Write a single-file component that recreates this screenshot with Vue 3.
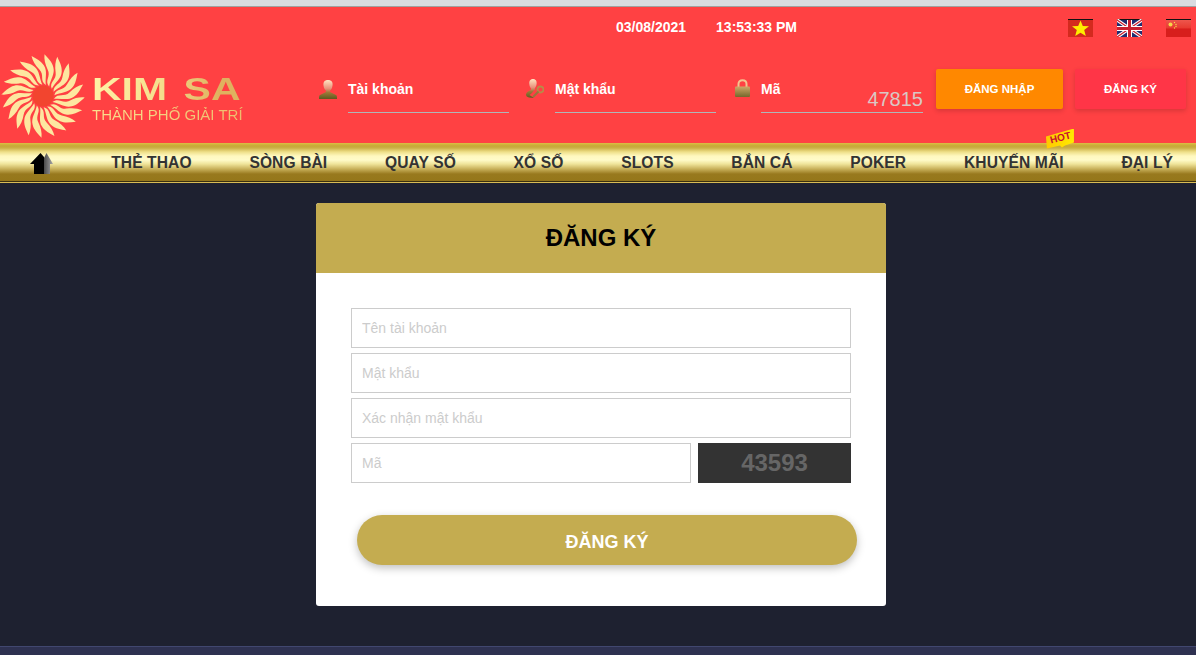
<script setup>
import { computed } from 'vue'

const petalCount = 20
const petals = computed(() =>
  Array.from({ length: petalCount }, (_, i) => (i * 360) / petalCount)
)
const navItems = ['THẺ THAO', 'SÒNG BÀI', 'QUAY SỐ', 'XỔ SỐ', 'SLOTS', 'BẮN CÁ', 'POKER', 'KHUYẾN MÃI', 'ĐẠI LÝ']
</script>

<template>
  <div class="page">
    <div class="chrome"></div>
    <header class="header">
      <div class="info-row">
        <span class="date">03/08/2021</span>
        <span class="time">13:53:33 PM</span>
        <div class="flags">
          <svg class="flag" viewBox="0 0 25 18" width="25" height="18">
            <rect width="25" height="18" fill="#d42a1e" />
            <rect width="25" height="1" fill="#111" />
            <polygon points="12.5,1.500 14.800,7 21,7.300 16.200,11.100 17.800,17 12.500,13.800 7.200,17 8.800,11.100 4,7.300 10.200,7" fill="#ffee00" />
          </svg>
          <svg class="flag" viewBox="0 0 25 18" width="25" height="18">
            <rect width="25" height="18" fill="#1f2c70" />
            <rect width="25" height="1" fill="#111" />
            <path d="M0 1 L25 18 M25 1 L0 18" stroke="#fff" stroke-width="3.400" />
            <path d="M0 1 L25 18 M25 1 L0 18" stroke="#c8202f" stroke-width="1.300" />
            <path d="M12.500 1 V18 M0 9.500 H25" stroke="#fff" stroke-width="5" />
            <path d="M12.500 1 V18 M0 9.500 H25" stroke="#c8202f" stroke-width="3" />
          </svg>
          <svg class="flag" viewBox="0 0 25 18" width="25" height="18">
            <defs>
              <linearGradient id="cnFlag" x1="0" y1="0" x2="0" y2="1">
                <stop offset="0" stop-color="#ee5a50" />
                <stop offset="0.5" stop-color="#e83a30" />
                <stop offset="0.55" stop-color="#d81e1c" />
                <stop offset="1" stop-color="#d81e1c" />
              </linearGradient>
            </defs>
            <rect width="25" height="18" fill="url(#cnFlag)" />
            <rect width="25" height="1" fill="#111" />
            <circle cx="4.500" cy="5.500" r="2" fill="#f5d84a" />
            <circle cx="8.500" cy="3.500" r=".7" fill="#f5d84a" />
            <circle cx="10" cy="5.500" r=".7" fill="#f5d84a" />
            <circle cx="10" cy="7.500" r=".7" fill="#f5d84a" />
            <circle cx="8.500" cy="9" r=".7" fill="#f5d84a" />
          </svg>
        </div>
      </div>

      <div class="login-row">
        <a class="logo">
          <svg class="sun" viewBox="0 0 88 88" width="84" height="84">
            <circle cx="44" cy="44" r="11" fill="#f2452f" />
            <g v-for="deg in petals" :key="deg" :transform="`rotate(${deg} 44 44)`">
              <path
                d="M55.500 47 C60 40 66 46 72 40 C76 36 81 33 86 32 C83 37 81 42 76 45 C70 49 63 46 55.500 47 Z"
                fill="#fde7a0"
              />
            </g>
          </svg>
          <div class="brand">
            <div class="brand-name">KIM SA</div>
            <div class="brand-sub">THÀNH PHỐ GIẢI TRÍ</div>
          </div>
        </a>

        <div class="fields">
          <label class="login-field">
            <svg class="field-icon" viewBox="0 0 18 20" width="18" height="20">
              <defs>
                <linearGradient id="iconGold" x1="0" y1="0" x2="0" y2="1">
                  <stop offset="0" stop-color="#ffe3c0" />
                  <stop offset="0.45" stop-color="#e8907a" />
                  <stop offset="0.65" stop-color="#a07a38" />
                  <stop offset="1" stop-color="#5e5a20" />
                </linearGradient>
                <linearGradient id="lockGold" x1="0" y1="0" x2="0" y2="1">
                  <stop offset="0" stop-color="#d0a868" />
                  <stop offset="1" stop-color="#75682c" />
                </linearGradient>
              </defs>
              <path d="M9 1 C12.500 1 14 3.200 13.500 6.500 C13.200 9.300 11.800 11 11 11.800 L11 13 L17 16 C18 16.600 18 18 18 20 L0 20 C0 18 0 16.600 1 16 L7 13 L7 11.800 C6.200 11 4.800 9.300 4.500 6.500 C4 3.200 5.500 1 9 1 Z" fill="url(#iconGold)" />
            </svg>
            <span class="field-body">
              <span class="field-label">Tài khoản</span>
            </span>
          </label>

          <label class="login-field">
            <svg class="field-icon" viewBox="0 0 18 20" width="18" height="20">
              <path d="M7 0 C10 0 11 2.500 10.600 5 C10.300 7 9.500 8.500 8.800 9.300 L8.800 10.500 L6 14 L3.500 16 L8 19 L3 18.500 C1 18 0 17 0 15.500 C0 13.500 3 12 5 10.800 L5 9.300 C4 8.500 3.500 7 3.300 5 C3 2.500 4 0 7 0 Z" fill="url(#iconGold)" />
              <circle cx="14.500" cy="10.500" r="3" fill="none" stroke="#b98a48" stroke-width="1.800" />
              <path d="M12.500 12.500 L7 18" stroke="#97763a" stroke-width="2" />
            </svg>
            <span class="field-body">
              <span class="field-label">Mật khẩu</span>
            </span>
          </label>

          <label class="login-field code-field">
            <svg class="field-icon lock" viewBox="0 0 15 18" width="15" height="18">
              <path d="M3.500 8 V5 C3.500 2.500 5 1.200 7.500 1.200 C10 1.200 11.500 2.500 11.500 5 V8" fill="none" stroke="#f4c490" stroke-width="2" />
              <rect y="7.500" width="15" height="10.500" rx="1" fill="url(#lockGold)" />
            </svg>
            <span class="field-body">
              <span class="field-label">Mã</span>
              <span class="code-value">47815</span>
            </span>
          </label>
        </div>

        <button class="head-btn login-btn">ĐĂNG NHẬP</button>
        <button class="head-btn signup-btn">ĐĂNG KÝ</button>
      </div>
    </header>

    <nav class="nav">
      <svg class="home" viewBox="0 0 23 21" width="23" height="21">
        <defs>
          <linearGradient id="homeGray" x1="0" y1="0" x2="1" y2="0">
            <stop offset="0" stop-color="#4a4a4a" />
            <stop offset="1" stop-color="#a8a8a8" />
          </linearGradient>
        </defs>
        <polygon points="16.500,0 23,11 20,11 20,21 14,21 14,5" fill="url(#homeGray)" />
        <polygon points="10.500,0 14,4 14,21 4,21 4,11 0,11" fill="#000" />
      </svg>
      <a v-for="item in navItems" :key="item" class="nav-item">
        {{ item }}
        <span v-if="item === 'KHUYẾN MÃI'" class="hot"><span class="hot-text">HOT</span></span>
      </a>
    </nav>

    <main class="main">
      <section class="card">
        <h1 class="card-title">ĐĂNG KÝ</h1>
        <form class="card-body" @submit.prevent>
          <input class="input" type="text" placeholder="Tên tài khoản" />
          <input class="input" type="text" placeholder="Mật khẩu" />
          <input class="input" type="text" placeholder="Xác nhận mật khẩu" />
          <div class="code-row">
            <input class="input code-input" type="text" placeholder="Mã" />
            <div class="captcha">43593</div>
          </div>
          <button class="submit" type="submit">ĐĂNG KÝ</button>
        </form>
      </section>
    </main>
    <footer class="footer"></footer>
  </div>
</template>

<style>
html, body { margin: 0; background: #1e2130; overflow: hidden; }
</style>

<style scoped>
.page {
  width: 1196px;
  height: 655px;
  overflow: hidden;
  display: flex;
  flex-direction: column;
  font-family: "Liberation Sans", Arial, sans-serif;
  background: #1e2130;
}
.chrome {
  height: 6px;
  background: #d9dbe0;
  border-bottom: 1px solid #a0a0a0;
  flex: none;
}
.header {
  height: 136px;
  flex: none;
  background: #ff4143;
  display: flex;
  flex-direction: column;
}
.info-row {
  height: 40px;
  display: flex;
  align-items: center;
  padding-left: 616px;
  color: #fff;
  font-size: 14px;
  font-weight: 700;
}
.time { margin-left: 30px; }
.flags {
  display: flex;
  gap: 24px;
  margin-left: auto;
  margin-right: 5px;
  padding-top: 2px;
}
.flag { display: block; }
.login-row {
  display: flex;
  align-items: flex-start;
  height: 96px;
}
.logo {
  width: 318px;
  flex: none;
  display: flex;
  align-items: flex-start;
  padding-top: 7px;
}
.sun { flex: none; display: block; margin-left: 1px; }
.brand { margin-left: 7px; padding-top: 19px; }
.brand-name {
  font-size: 32px;
  line-height: 33px;
  font-weight: 700;
  white-space: nowrap;
  word-spacing: 4px;
  transform: scaleX(1.28);
  transform-origin: left center;
  background: linear-gradient(90deg, #fff2a6 0%, #f5df8e 45%, #dfb15f 85%);
  -webkit-background-clip: text;
  background-clip: text;
  color: transparent;
  width: 117px;
}
.brand-sub {
  font-size: 15px;
  line-height: 18px;
  white-space: nowrap;
  background: linear-gradient(90deg, #fbe08e, #eebd6c);
  -webkit-background-clip: text;
  background-clip: text;
  color: transparent;
  margin-top: 0;
}
.fields {
  display: flex;
  gap: 16px;
  width: 605px;
  flex: none;
  padding-top: 29px;
}
.login-field {
  display: flex;
  width: 191px;
  flex: none;
}
.code-field { width: 191px; }
.field-icon {
  margin-top: 3px;
  margin-left: 1px;
  width: 18px;
  margin-right: 11px;
  flex: none;
  display: block;
}
.lock { margin-left: 3px; margin-right: 11px; width: 15px; }
.field-body {
  flex: 1;
  height: 36px;
  border-bottom: 1px solid #b0b6b8;
  display: flex;
  justify-content: space-between;
  color: #fff;
}
.field-label {
  font-size: 14px;
  font-weight: 700;
  line-height: 26px;
}
.code-value {
  font-size: 20px;
  line-height: 24px;
  margin-top: 11px;
  color: #d9c7c4;
}
.head-btn {
  height: 40px;
  margin-top: 22px;
  border: 0;
  border-radius: 2px;
  color: #fff;
  font: 700 11.500px "Liberation Sans", Arial, sans-serif;
  padding: 0;
  box-shadow: 0 2px 5px rgba(0, 0, 0, 0.16);
}
.login-btn {
  width: 127px;
  margin-left: 13px;
  background: #ff8800;
}
.signup-btn {
  width: 111px;
  margin-left: 12px;
  background: #ff3547;
}
.nav {
  height: 40px;
  flex: none;
  box-sizing: border-box;
  display: flex;
  align-items: center;
  gap: 57.700px;
  padding: 0 0 1px 30px;
  background: linear-gradient(
    180deg,
    #dcc048 0,
    #d4b63c 1px,
    #c6a838 3px,
    #cbb046 5px,
    #efe08a 9px,
    #fff8bf 13px,
    #fffbc9 17px,
    #efe49a 21px,
    #c8b05a 26px,
    #98791e 31px,
    #95771a 38px,
    #3a2f10 38px,
    #3a2f10 39px,
    #d8bc55 39px,
    #d8bc55 40px
  );
}
.home { flex: none; display: block; margin-top: 2px; margin-right: 0.500px; }
.nav-item {
  position: relative;
  font-size: 15.600px;
  letter-spacing: 0.100px;
  font-weight: 700;
  color: #333;
  white-space: nowrap;
}
.hot {
  position: absolute;
  left: 82px;
  top: -25px;
  width: 29px;
  height: 20px;
  background: linear-gradient(100deg, #ffc400, #ffee00);
  clip-path: polygon(0 8px, 28px 0, 28px 14px, 19px 17px, 16px 19px, 14px 17px, 1px 20px);
}
.hot-text {
  position: absolute;
  left: 4px;
  top: 3px;
  font-size: 10px;
  line-height: 12px;
  font-weight: 700;
  letter-spacing: 0;
  color: #c8102e;
  transform: rotate(-14deg);
}
.main {
  flex: 1;
  display: flex;
  justify-content: center;
  align-items: flex-start;
  padding-top: 20px;
  padding-left: 6px;
  box-sizing: border-box;
  min-height: 0;
}
.card {
  width: 570px;
  height: 403px;
  border-radius: 3px;
  overflow: hidden;
  background: #fff;
}
.card-title {
  margin: 0;
  height: 70px;
  line-height: 70px;
  background: #c4ac50;
  color: #000;
  font-size: 24px;
  font-weight: 700;
  text-align: center;
}
.card-body {
  display: flex;
  flex-direction: column;
  gap: 5px;
  padding: 35px 35px 0;
}
.input {
  display: block;
  box-sizing: border-box;
  width: 500px;
  height: 40px;
  border: 1px solid #ccc;
  padding: 0 10px;
  margin: 0;
  border-radius: 0;
  outline: 0;
  font: 14px "Liberation Sans", Arial, sans-serif;
  color: #333;
  background: #fff;
}
.input::placeholder { color: #ccc; opacity: 1; }
.code-row { display: flex; gap: 7px; }
.code-input { width: 340px; }
.captcha {
  width: 153px;
  height: 40px;
  line-height: 40px;
  background: #333;
  color: #666;
  font-size: 24px;
  font-weight: 700;
  text-align: center;
}
.submit {
  width: 500px;
  height: 50px;
  margin: 27px 0 0 6px;
  border: 0;
  border-radius: 25px;
  background: #c4ac50;
  color: #fff;
  font: 700 18px "Liberation Sans", Arial, sans-serif;
  box-shadow: 0 3px 8px rgba(0, 0, 0, 0.25);
  padding: 4px 0 0;
}
.footer {
  height: 9px;
  box-sizing: border-box;
  flex: none;
  background: #2e3150;
  border-top: 1px solid #41476f;
}
</style>
